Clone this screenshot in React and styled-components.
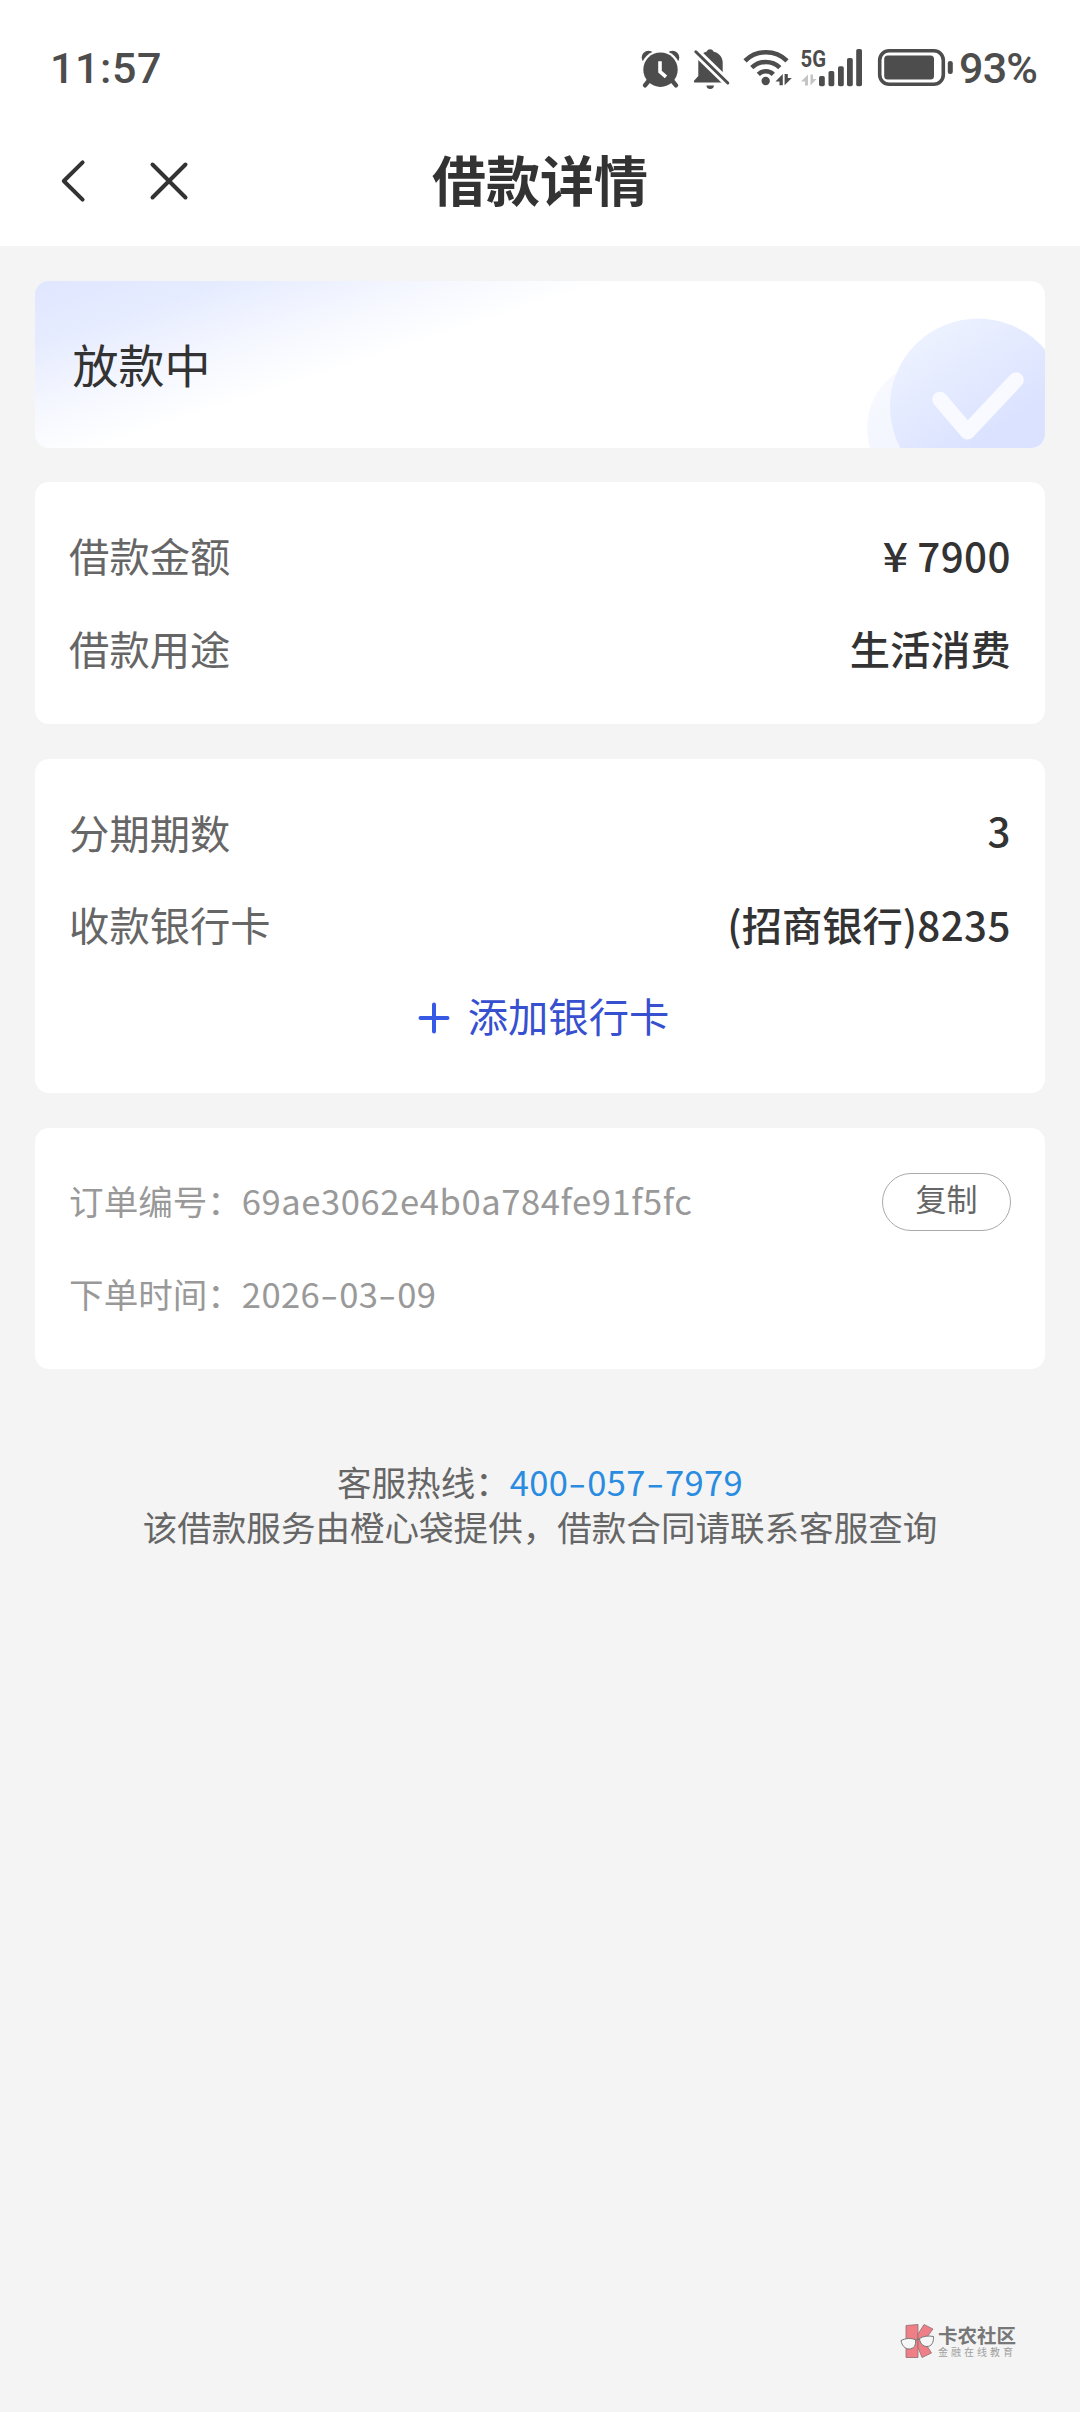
import React from "react";
import styled, { createGlobalStyle } from "styled-components";

const AlarmIcon = () => (
  <svg width="46" height="44" viewBox="0 0 46 44" fill="none">
    <circle cx="10.500" cy="11.500" r="6.800" fill="#4d4d4d" />
    <circle cx="34.500" cy="11.500" r="6.800" fill="#4d4d4d" />
    <circle cx="22.500" cy="24" r="19.800" fill="#fff" />
    <path d="M7 39.300l4-4.800M38 39.300l-4-4.800" stroke="#4d4d4d" strokeWidth="4.400" strokeLinecap="round" />
    <circle cx="22.500" cy="23.700" r="17.200" fill="#4d4d4d" />
    <path d="M22 15.200v10.400l6 5.200" stroke="#fff" strokeWidth="3.600" />
  </svg>
);

const BellOffIcon = () => (
  <svg width="44" height="44" viewBox="0 0 44 44" fill="none">
    <path d="M4 36.500v-1.800l4.300-4.700V16c0-5.400 3.400-9 8.400-10.400a3.600 3.600 0 0 1 6.800 0c5.400 1.400 9.200 5.600 9.200 11V30l4.300 4.700v1.800z" fill="#4d4d4d" />
    <path d="M32 27l9 3v8h-9z" fill="#fff" />
    <path d="M16.500 39.500h7.400a3.700 3.400 0 0 1-7.400 0z" fill="#4d4d4d" />
    <path d="M3 3l38 37" stroke="#fff" strokeWidth="8.500" />
    <path d="M5.800 5.800l32 31.200" stroke="#4d4d4d" strokeWidth="3" strokeLinecap="round" />
  </svg>
);

const WifiIcon = () => (
  <svg width="56" height="44" viewBox="0 0 56 44" fill="none">
    <g stroke="#4d4d4d" strokeWidth="4.600">
      <path d="M5 14.800a30 30 0 0 1 42 0" />
      <path d="M11.800 21.700a20 20 0 0 1 28 0" />
      <path d="M18.300 28.300a10.700 10.700 0 0 1 15 0" />
    </g>
    <circle cx="25.700" cy="35" r="4.200" fill="#4d4d4d" />
    <path d="M42.800 28V39.300H39.500V35.500H35.500zM44.600 39.300V28H47.800V32H51.800z" fill="#4d4d4d" />
  </svg>
);

const SignalIcon = () => (
  <svg width="68" height="44" viewBox="0 0 68 44" fill="#4d4d4d">
    <path d="M12 28.500V39.500H9V35.500H5zM14.500 39.500V28.500H17V33H20.500z" fill="#c4c4c4" />
    <rect x="23" y="30" width="5.800" height="10.300" rx="1.800" />
    <rect x="32.500" y="25" width="5.800" height="15.300" rx="1.800" />
    <rect x="42" y="20.300" width="5.800" height="20" rx="1.800" />
    <rect x="51" y="12" width="5.800" height="28.300" rx="1.800" />
    <rect x="60.200" y="3" width="5.800" height="37.300" rx="1.800" />
    <text x="4.600" y="20.600" fontFamily="Roboto, sans-serif" fontWeight="700" fontSize="24" textLength="25.500" lengthAdjust="spacingAndGlyphs">5G</text>
  </svg>
);

const BatteryIcon = () => (
  <svg width="80" height="44" viewBox="0 0 80 44" fill="none">
    <rect x="5.700" y="4.700" width="63.600" height="33.600" rx="9.500" stroke="#4d4d4d" strokeWidth="3.600" />
    <rect x="10.200" y="9.500" width="49.800" height="24" rx="3.500" fill="#4d4d4d" />
    <rect x="73.800" y="15" width="5" height="13" rx="2.300" fill="#4d4d4d" />
  </svg>
);

const BackIcon = () => (
  <svg width="28" height="48" viewBox="0 0 28 48" fill="none">
    <path d="M22.600 5.300L3.800 24l18.800 18.700" stroke="#333" strokeWidth="4" strokeLinecap="round" strokeLinejoin="round" />
  </svg>
);

const CloseIcon = () => (
  <svg width="42" height="42" viewBox="0 0 42 42" fill="none">
    <path d="M4.500 4.500l33 33M37.500 4.500l-33 33" stroke="#333" strokeWidth="4" strokeLinecap="round" />
  </svg>
);

const PlusIcon = () => (
  <svg width="34" height="34" viewBox="0 0 34 34" fill="none">
    <path d="M17 3.500v27M3.500 17h27" stroke="#365ae6" strokeWidth="4" strokeLinecap="round" />
  </svg>
);

const CheckArt = () => (
  <svg width="185" height="140" viewBox="0 0 185 140" fill="none">
    <defs>
      <linearGradient id="disc" x1="50" y1="15" x2="140" y2="150" gradientUnits="userSpaceOnUse">
        <stop offset="0" stopColor="#eff4ff" />
        <stop offset="0.850" stopColor="#dbe2ff" />
      </linearGradient>
      <linearGradient id="back" x1="10" y1="60" x2="50" y2="150" gradientUnits="userSpaceOnUse">
        <stop offset="0" stopColor="#f8faff" />
        <stop offset="1" stopColor="#f3f5ff" />
      </linearGradient>
    </defs>
    <circle cx="73" cy="120" r="66" fill="url(#back)" />
    <circle cx="118" cy="98.500" r="88" fill="url(#disc)" />
    <path d="M80 91.500l27.500 32.200L156 72" stroke="#f8faff" strokeWidth="15.500" strokeLinecap="round" strokeLinejoin="round" />
  </svg>
);

const BrandMark = () => (
  <svg width="36" height="38" viewBox="0 0 36 38" fill="none">
    <g fill="#ef7f86" stroke="#8d6f72" strokeWidth="0.800">
      <path d="M6 3.500l12-1v33H6z" />
      <path d="M18 12l6-9.500 9 4.500-9 12 7.500 12-9.500 4.500-4-10z" />
    </g>
    <path d="M1 18.500c5-2.500 10-2.600 14.500-.8.800 6-2 9.300-6.500 9.300-4 0-7.200-3.500-8-8.500zM19.500 16.500c4-2.500 9-3 14-2 .3 6-2 10-6.500 10-4 0-7-3-7.500-8z" fill="#f6f6f6" stroke="#777" strokeWidth="1" />
    <path d="M15.500 18.500q2-2 4-1.500" stroke="#777" strokeWidth="1" />
  </svg>
);

// digits keep a tight pitch while the separators are wide
const DashedNumber = ({ value }) =>
  value.split("-").map((part, i) => (
    <React.Fragment key={i}>
      {i > 0 && <Dash>-</Dash>}
      {part}
    </React.Fragment>
  ));

function App() {
  return (
    <Page>
      <GlobalStyle />
      <StatusBar>
        <Clock>11:57</Clock>
        <StatusIcons>
          <AlarmIcon />
          <BellOffIcon />
          <WifiIcon />
          <SignalIcon />
          <BatteryIcon />
          <Percent>93%</Percent>
        </StatusIcons>
      </StatusBar>
      <NavBar>
        <NavButtons>
          <IconButton aria-label="返回">
            <BackIcon />
          </IconButton>
          <IconButton aria-label="关闭">
            <CloseIcon />
          </IconButton>
        </NavButtons>
        <Title>借款详情</Title>
      </NavBar>

      <Content>
        <StateCard>
          <StateText>放款中</StateText>
          <CheckArt />
        </StateCard>

        <Card>
          <Row>
            <Label>借款金额</Label>
            <Value>
              <Yen>¥</Yen>
              <Num>7900</Num>
            </Value>
          </Row>
          <Row>
            <Label>借款用途</Label>
            <Value>生活消费</Value>
          </Row>
        </Card>

        <Card>
          <Row>
            <Label>分期期数</Label>
            <Value $lift>
              <Num>3</Num>
            </Value>
          </Row>
          <Row>
            <Label>收款银行卡</Label>
            <Value>
              (招商银行)<Num>8235</Num>
            </Value>
          </Row>
          <AddCard>
            <PlusIcon />
            <span>添加银行卡</span>
          </AddCard>
        </Card>

        <Card>
          <Row>
            <Meta>
              订单编号：<MetaNum $spacing="0.58px">69ae3062e4b0a784fe91f5fc</MetaNum>
            </Meta>
            <CopyButton>复制</CopyButton>
          </Row>
          <Row>
            <Meta>
              下单时间：
              <MetaNum $spacing="0.4px">
                <DashedNumber value="2026-03-09" />
              </MetaNum>
            </Meta>
          </Row>
        </Card>
      </Content>

      <Footer>
        <p>
          客服热线：
          <Phone href="tel:400-057-7979">
            <DashedNumber value="400-057-7979" />
          </Phone>
        </p>
        <p>该借款服务由橙心袋提供，借款合同请联系客服查询</p>
      </Footer>

      <Brand>
        <BrandMark />
        <BrandText>
          <BrandName>卡农社区</BrandName>
          <BrandSlogan>金融在线教育</BrandSlogan>
        </BrandText>
      </Brand>
    </Page>
  );
}

export default App;

const GlobalStyle = createGlobalStyle`
  * {
    box-sizing: border-box;
  }
  body {
    margin: 0;
    background: #f4f4f4;
    font-family: "Noto Sans CJK SC", sans-serif;
    color: #333;
  }
  p, h1 {
    margin: 0;
  }
  svg {
    display: block;
    flex-shrink: 0;
  }
`;

const Page = styled.div`
  display: flex;
  flex-direction: column;
  width: 1080px;
  height: 2412px;
  overflow: hidden;
`;

const StatusBar = styled.header`
  display: flex;
  align-items: center;
  justify-content: space-between;
  height: 116px;
  padding: 20px 43px 0 50px;
  background: #fff;
  color: #4d4d4d;
  font-family: Roboto, sans-serif;
`;

const Clock = styled.span`
  font-size: 43px;
  font-weight: 500;
  line-height: 44px;
  letter-spacing: 0.600px;
`;

const StatusIcons = styled.div`
  display: flex;
  align-items: center;
  svg:nth-child(1) {
    margin-right: 6px;
  }
  svg:nth-child(2) {
    margin-right: 6px;
  }
  svg:nth-child(4) {
    margin-right: 10px;
  }
`;

const Percent = styled.span`
  width: 83px;
  padding-left: 5px;
  font-size: 43px;
  font-weight: 500;
  line-height: 44px;
  letter-spacing: -0.800px;
  white-space: nowrap;
`;

const NavBar = styled.nav`
  display: grid;
  grid-template-columns: 1fr auto 1fr;
  align-items: center;
  height: 130px;
  padding: 0 60px;
  background: #fff;
`;

const NavButtons = styled.div`
  display: flex;
  align-items: center;
  gap: 60px;
`;

const IconButton = styled.button`
  padding: 0;
  border: 0;
  background: none;
`;

const Title = styled.h1`
  padding-bottom: 5px;
  font-size: 54px;
  font-weight: 700;
  line-height: 60px;
`;

const Content = styled.main`
  display: flex;
  flex-direction: column;
  gap: 34.560px;
  padding: 34.560px 34.560px 0;
`;

const Card = styled.section`
  padding: 28.800px 34.560px;
  border-radius: 14px;
  background: #fff;
`;

const StateCard = styled.section`
  display: flex;
  align-items: flex-end;
  justify-content: space-between;
  height: 167.400px;
  padding-left: 38px;
  border-radius: 14px;
  overflow: hidden;
  background: linear-gradient(162deg, #dfe6ff 0%, #e6ecff 13%, #f5f7ff 26%, #fff 38%);
`;

const StateText = styled.span`
  align-self: center;
  padding-bottom: 3px;
  font-size: 46px;
  line-height: 60px;
`;

const Row = styled.div`
  display: flex;
  align-items: center;
  justify-content: space-between;
  height: 92.160px;
`;

const Label = styled.span`
  padding-bottom: 4px;
  font-size: 40.300px;
  line-height: 56px;
  color: #666;
`;

const Value = styled.span`
  display: flex;
  align-items: center;
  padding-bottom: ${(props) => (props.$lift ? "8px" : "4px")};
  font-size: 40.300px;
  font-weight: 500;
  line-height: 56px;
`;

const Num = styled.span`
  letter-spacing: 0.450px;
`;

const Yen = styled.span`
  margin-right: 10px;
  transform: scaleX(1.1);
`;

const AddCard = styled.div`
  display: flex;
  align-items: center;
  justify-content: center;
  gap: 17px;
  height: 92.160px;
  padding-left: 6px;
  font-size: 40.300px;
  line-height: 56px;
  color: #3650d0;
  span {
    padding-bottom: 7px;
  }
`;

const Meta = styled.span`
  padding-bottom: 4px;
  font-size: 34.560px;
  line-height: 48px;
  color: #999;
`;

const MetaNum = styled.span`
  letter-spacing: ${(props) => props.$spacing};
`;

const Dash = styled.span`
  display: inline-block;
  width: 19px;
  text-align: center;
  transform: scaleX(1.5);
`;

const CopyButton = styled.button`
  width: 129px;
  height: 58px;
  padding: 0 0 9px;
  border: 1px solid #aaa;
  border-radius: 29px;
  background: #fff;
  font-family: inherit;
  font-size: 31px;
  line-height: 40px;
  color: #666;
`;

const Footer = styled.footer`
  padding-top: 90px;
  font-size: 34.560px;
  line-height: 45px;
  text-align: center;
  color: #666;
`;

const Phone = styled.a`
  color: #2a8ce0;
  text-decoration: none;
  letter-spacing: 0.350px;
`;

const Brand = styled.div`
  display: flex;
  align-items: center;
  gap: 2px;
  margin: auto 64px 52px auto;
`;

const BrandText = styled.div`
  display: flex;
  flex-direction: column;
`;

const BrandName = styled.span`
  font-size: 19.500px;
  font-weight: 700;
  line-height: 21px;
  color: #777;
`;

const BrandSlogan = styled.span`
  font-size: 10px;
  line-height: 14px;
  letter-spacing: 3px;
  color: #a0a0a0;
`;
